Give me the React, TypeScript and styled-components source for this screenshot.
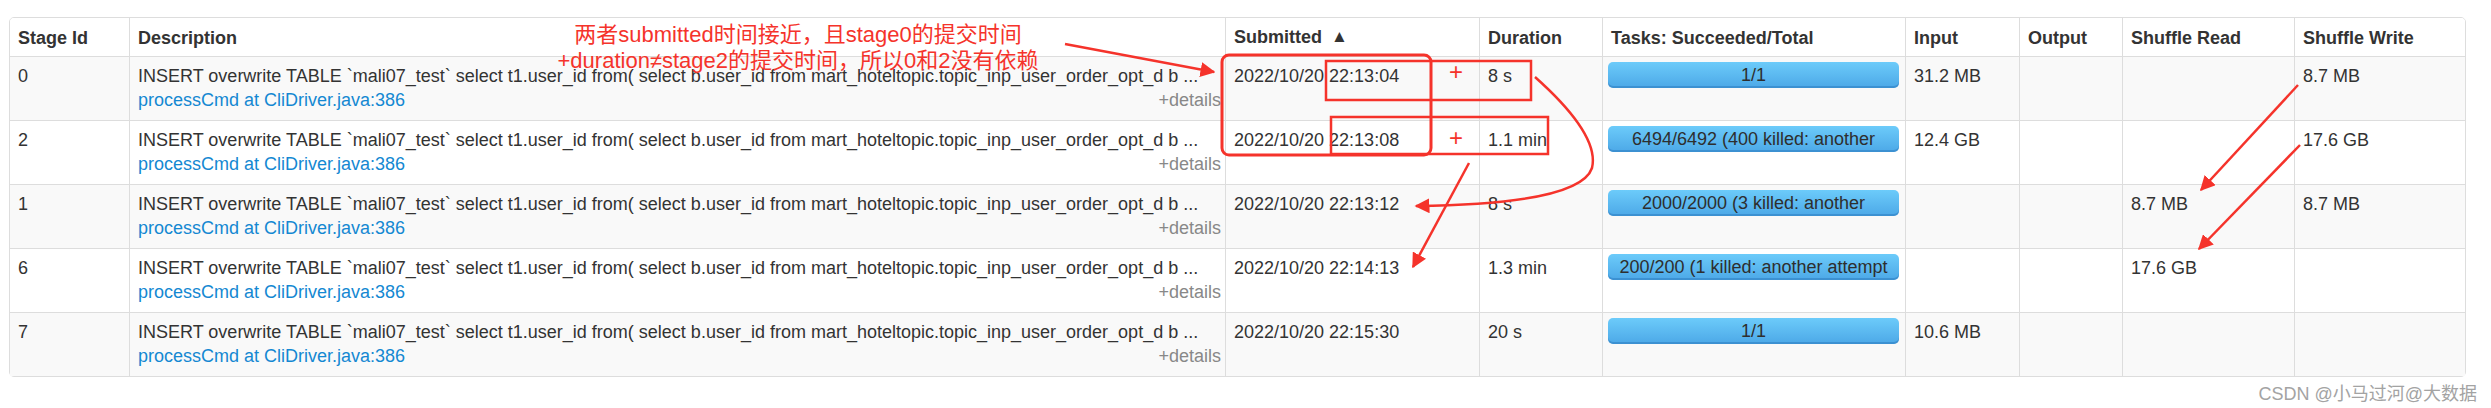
import React from 'react'
import styled, { createGlobalStyle } from 'styled-components'

const GlobalStyle = createGlobalStyle`
  html, body {
    margin: 0;
    padding: 0;
    background: #fff;
  }
  body {
    font-family: "Liberation Sans", Arial, "Noto Sans CJK SC", sans-serif;
    color: #333;
  }
`

type Stage = {
  id: string
  submitted: string
  duration: string
  tasks: string
  input: string
  output: string
  read: string
  write: string
}

const DESC =
  'INSERT overwrite TABLE `mali07_test` select t1.user_id from( select b.user_id from mart_hoteltopic.topic_inp_user_order_opt_d b ...'

const stages: Stage[] = [
  { id: '0', submitted: '2022/10/20 22:13:04', duration: '8 s', tasks: '1/1', input: '31.2 MB', output: '', read: '', write: '8.7 MB' },
  { id: '2', submitted: '2022/10/20 22:13:08', duration: '1.1 min', tasks: '6494/6492 (400 killed: another attempt succeeded)', input: '12.4 GB', output: '', read: '', write: '17.6 GB' },
  { id: '1', submitted: '2022/10/20 22:13:12', duration: '8 s', tasks: '2000/2000 (3 killed: another attempt succeeded)', input: '', output: '', read: '8.7 MB', write: '8.7 MB' },
  { id: '6', submitted: '2022/10/20 22:14:13', duration: '1.3 min', tasks: '200/200 (1 killed: another attempt succeeded)', input: '', output: '', read: '17.6 GB', write: '' },
  { id: '7', submitted: '2022/10/20 22:15:30', duration: '20 s', tasks: '1/1', input: '10.6 MB', output: '', read: '', write: '' },
]

const columns = [
  { title: 'Stage Id', width: 119 },
  { title: 'Description', width: 1096 },
  { title: 'Submitted', width: 254, sorted: true },
  { title: 'Duration', width: 123 },
  { title: 'Tasks: Succeeded/Total', width: 303 },
  { title: 'Input', width: 114 },
  { title: 'Output', width: 103 },
  { title: 'Shuffle Read', width: 172 },
  { title: 'Shuffle Write', width: 171 },
]

export default function App() {
  return (
    <Page>
      <GlobalStyle />
      <Table>
        <colgroup>
          {columns.map((c) => (
            <Col key={c.title} $w={c.width} />
          ))}
        </colgroup>
        <thead>
          <tr>
            {columns.map((c) => (
              <Th key={c.title}>
                {c.title}
                {c.sorted && <SortArrow>▲</SortArrow>}
              </Th>
            ))}
          </tr>
        </thead>
        <tbody>
          {stages.map((s, i) => (
            <Row key={s.id} $striped={i % 2 === 0}>
              <Td>{s.id}</Td>
              <Td>
                <DescLine>{DESC}</DescLine>
                <DescFoot>
                  <NameLink href="#">processCmd at CliDriver.java:386</NameLink>
                  <Details>+details</Details>
                </DescFoot>
              </Td>
              <Td>{s.submitted}</Td>
              <Td>{s.duration}</Td>
              <ProgressCell>
                <Bar>
                  <BarText>{s.tasks}</BarText>
                </Bar>
              </ProgressCell>
              <Td>{s.input}</Td>
              <Td>{s.output}</Td>
              <Td>{s.read}</Td>
              <Td>{s.write}</Td>
            </Row>
          ))}
        </tbody>
      </Table>

      <Footer>CSDN @小马过河@大数据</Footer>

      <Note>
        两者submitted时间接近，且stage0的提交时间
        <br />
        +duration≠stage2的提交时间，所以0和2没有依赖
      </Note>

      <Marks viewBox="0 0 2491 408">
        <defs>
          <marker id="head" viewBox="0 0 10 10" refX="9" refY="5" markerWidth="6" markerHeight="6" orient="auto-start-reverse">
            <path d="M0 0 L10 5 L0 10 z" fill="#f5332b" />
          </marker>
        </defs>
        <g fill="none" stroke="#f5332b" strokeWidth="2.5">
          <rect x="1222" y="55" width="209" height="100" rx="7" strokeWidth="3" />
          <rect x="1326" y="61" width="205" height="39" />
          <rect x="1331" y="117" width="217" height="37" />
          <line x1="1065" y1="44" x2="1214" y2="72" markerEnd="url(#head)" />
          <path d="M1535 77 Q1600 135 1592 168 Q1580 204 1416 206" markerEnd="url(#head)" />
          <line x1="1469" y1="163" x2="1413" y2="267" markerEnd="url(#head)" />
          <line x1="2298" y1="85" x2="2201" y2="190" markerEnd="url(#head)" />
          <line x1="2300" y1="145" x2="2199" y2="249" markerEnd="url(#head)" />
        </g>
        <g fill="#f5332b" fontSize="24" fontFamily="Liberation Sans, sans-serif" textAnchor="middle">
          <text x="1456" y="80">+</text>
          <text x="1456" y="146">+</text>
        </g>
      </Marks>
    </Page>
  )
}

const Page = styled.div`
  position: relative;
  width: 2491px;
  height: 408px;
  padding-top: 17px;
  padding-left: 9px;
  box-sizing: border-box;
  overflow: hidden;
`

const Table = styled.table`
  width: 2457px;
  table-layout: fixed;
  border-collapse: separate;
  border-spacing: 0;
  border: 1px solid #ddd;
  border-radius: 5px;
  font-size: 18px;
  line-height: 24px;
  color: #333;
`

const Col = styled.col<{ $w: number }>`
  width: ${(p) => p.$w}px;
`

const Th = styled.th`
  text-align: left;
  font-weight: 700;
  padding: 7px 8px 6px;
  border-left: 1px solid #ddd;
  white-space: nowrap;
  overflow: hidden;
  background: #fff;

  &:first-child {
    border-left: none;
    border-top-left-radius: 4px;
  }
  &:last-child {
    border-top-right-radius: 4px;
  }
`

const SortArrow = styled.span`
  font-size: 17px;
  margin-left: 9px;
  position: relative;
  top: -1px;
`

const Row = styled.tr<{ $striped: boolean }>`
  background: ${(p) => (p.$striped ? '#f9f9f9' : '#fff')};
`

const Td = styled.td`
  vertical-align: top;
  padding: 7px 8px 8px;
  border-top: 1px solid #ddd;
  border-left: 1px solid #ddd;
  white-space: nowrap;
  overflow: hidden;

  &:first-child {
    border-left: none;
  }
`

const ProgressCell = styled(Td)`
  padding: 5px 6px 0 5px;
`

const Bar = styled.div`
  height: 26px;
  border-radius: 5px;
  overflow: hidden;
  background: linear-gradient(to bottom, #6ccbfa, #4ca8e7);
  box-shadow: inset 0 -2px 0 rgba(30, 100, 170, 0.35);
`

const BarText = styled.div`
  padding: 0 4px;
  text-align: center;
  white-space: normal;
  line-height: 26px;
  color: #2e2e2e;
`

const DescLine = styled.div`
  overflow: hidden;
  white-space: nowrap;
`

const DescFoot = styled.div`
  display: flex;
  justify-content: space-between;
  align-items: baseline;
`

const NameLink = styled.a`
  color: #1488d2;
  text-decoration: none;
`

const Details = styled.span`
  color: #888;
  margin-right: -4px;
`

const Footer = styled.div`
  display: flex;
  justify-content: flex-end;
  padding-right: 14px;
  margin-top: 7px;
  font-family: "Liberation Sans", "Noto Sans CJK SC", sans-serif;
  font-size: 18px;
  line-height: 20px;
  color: #a3a3a3;
`

const Note = styled.div`
  position: absolute;
  left: 540px;
  top: 22px;
  width: 516px;
  text-align: center;
  font-family: "Liberation Sans", "Noto Sans CJK SC", sans-serif;
  font-size: 22px;
  line-height: 26px;
  color: #f5332b;
  white-space: nowrap;
`

const Marks = styled.svg`
  position: absolute;
  left: 0;
  top: 0;
  width: 2491px;
  height: 408px;
  pointer-events: none;
`
